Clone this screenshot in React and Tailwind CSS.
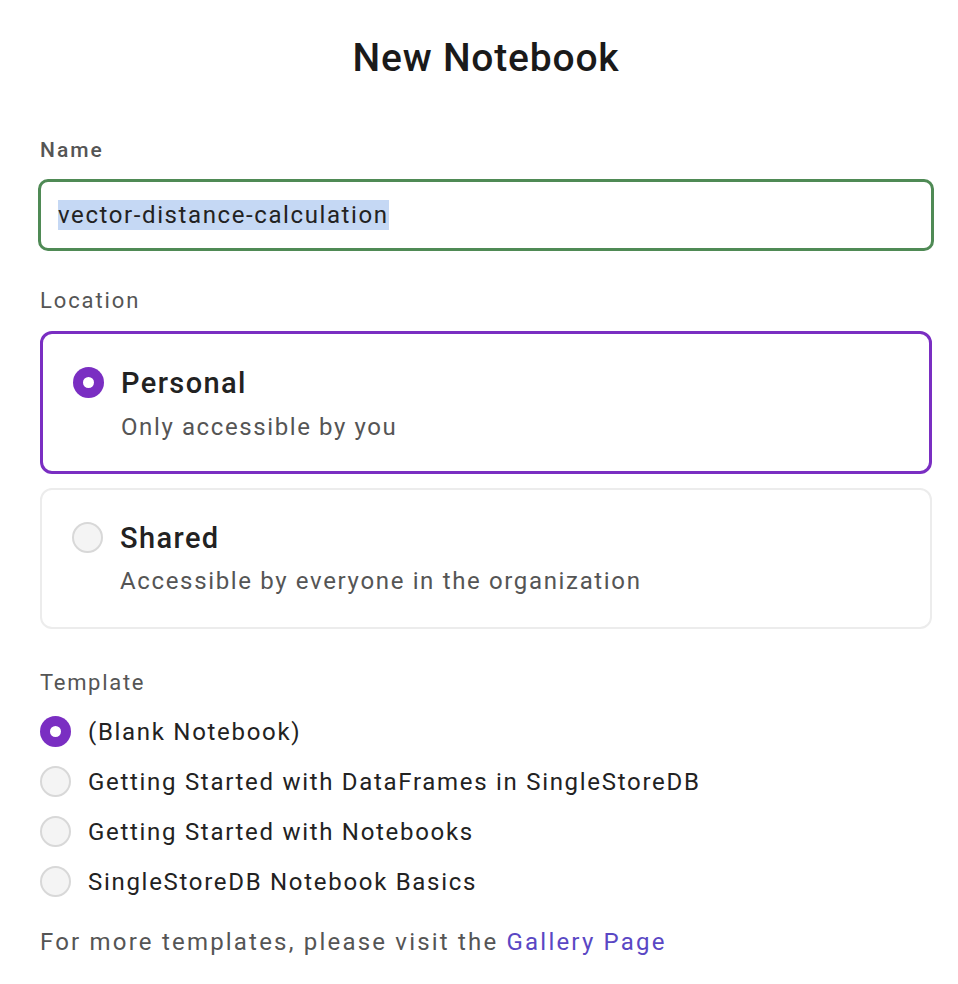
import React from "react";

function Radio({ checked, className = "" }) {
  if (checked) {
    return (
      <span className={"flex h-[31px] w-[31px] shrink-0 items-center justify-center rounded-full bg-[#7a2ec2] " + className}>
        <span className="h-[11px] w-[11px] rounded-full bg-white" />
      </span>
    );
  }
  return <span className={"h-[31px] w-[31px] shrink-0 rounded-full border-2 border-[#d8d8d8] bg-[#f4f4f4] " + className} />;
}

export default function App() {
  const templates = [
    ["(Blank Notebook)", true],
    ["Getting Started with DataFrames in SingleStoreDB", false],
    ["Getting Started with Notebooks", false],
    ["SingleStoreDB Notebook Basics", false],
  ];
  return (
    <div className="min-h-[984px] w-[958px] bg-white font-['Roboto',sans-serif] text-[#1f1f1f]">
      <div className="pl-[40px] pr-[26px] pt-[36px] text-center text-[39px] font-medium leading-[44px] tracking-[0.8px] text-[#1a1a1a]">New Notebook</div>

      <div className="pl-[40px] pr-[26px] pt-[58px]">
        <div className="text-[21px] font-medium leading-[24px] tracking-[2px] text-[#555]">Name</div>
        <div className="-mx-[2px] mt-[17px] flex h-[72px] items-center rounded-[10px] border-[3px] border-[#4f8a55] px-[17px]">
          <span className="bg-[#c5d8f4] text-[24px] leading-[30px] tracking-[1.6px] text-[#222]">vector-distance-calculation</span>
        </div>

        <div className="mt-[38px] text-[22px] leading-[24px] tracking-[1.9px] text-[#555]">Location</div>
        <div className="mt-[18px] flex items-start gap-[17px] rounded-[12px] border-[3px] border-[#7a2ec2] pb-[29px] pl-[30px] pr-4 pt-[32px]">
          <Radio checked className="mt-[1px]" />
          <div>
            <div className="text-[29px] font-medium leading-[34px] tracking-[1.4px] text-[#222]">Personal</div>
            <div className="mt-[12px] text-[24px] leading-[30px] tracking-[1.6px] text-[#555]">Only accessible by you</div>
          </div>
        </div>
        <div className="mt-[14px] flex items-start gap-[17px] rounded-[12px] border-[2px] border-[#ececec] pb-[31px] pl-[30px] pr-4 pt-[31px]">
          <Radio className="mt-[1px]" />
          <div>
            <div className="text-[29px] font-medium leading-[34px] tracking-[1.4px] text-[#222]">Shared</div>
            <div className="mt-[11px] text-[24px] leading-[30px] tracking-[1.65px] text-[#555]">Accessible by everyone in the organization</div>
          </div>
        </div>

        <div className="mt-[42px] text-[22px] leading-[24px] tracking-[1.7px] text-[#555]">Template</div>
        <div className="mt-[21px] flex flex-col gap-[19px]">
          {templates.map(([t, c]) => (
            <div key={t} className="flex items-center gap-[17px]">
              <Radio checked={c} />
              <span className="text-[24px] leading-[30px] tracking-[1.7px] text-[#222]">{t}</span>
            </div>
          ))}
        </div>

        <div className="mt-[30px] text-[24px] leading-[30px] tracking-[2.2px] text-[#555]">
          For more templates, please visit the <span className="text-[#5a47c4]">Gallery Page</span>
        </div>
      </div>
    </div>
  );
}
